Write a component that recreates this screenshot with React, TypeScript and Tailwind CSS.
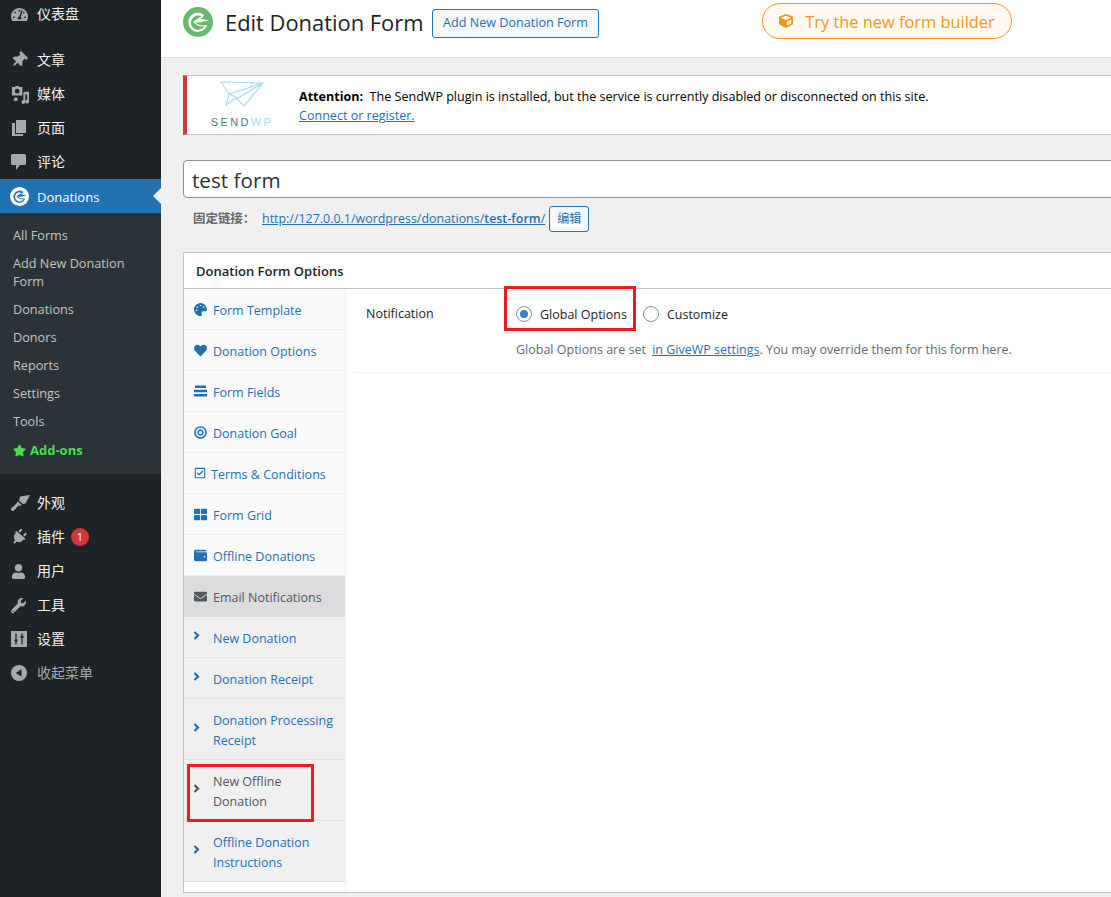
import type { ReactNode } from 'react'
import {
  FaThumbtack, FaPlug, FaUser, FaWrench, FaTachometerAlt, FaStar,
  FaPalette, FaHeart, FaBullseye, FaRegCheckSquare, FaThLarge, FaWallet, FaEnvelope, FaCube,
} from 'react-icons/fa'

const ff = "font-['Open_Sans','Noto_Sans_CJK_SC',sans-serif]"

function GiveLogo({ size, bg, fg }: { size: number; bg: string; fg: string }) {
  return (
    <svg width={size} height={size} viewBox="0 0 32 32">
      <circle cx="16" cy="16" r="16" fill={bg} />
      <path d="M22.5 8.5 A10.2 10.2 0 1 0 25.6 19.5 L18 19.5 L13 16.5 L28 14 L18.5 13.2 A5 5 0 0 1 20.5 11.5 Z" fill={fg} />
      <path d="M20 10.2 A7.6 7.6 0 1 0 22.6 20.6 L16.8 20.6 L10.6 16 L17.5 11.2 Z" fill={bg} />
      <path d="M12.5 16 L18 12.5 L27 14 L18 16.5 Z" fill={fg} />
    </svg>
  )
}

function MediaIcon() {
  return (
    <svg width="19" height="19" viewBox="0 0 20 20" fill="#a7aaad">
      <path d="M1 2h3l1-1h3l1 1h3v9H1z M6.500 4a2.500 2.500 0 1 0 0 5 2.500 2.500 0 0 0 0-5z" fillRule="evenodd" />
      <path d="M13 8h1v-1h5v10.500a2 2 0 1 1-2-2V10h-2v8a2 2 0 1 1-2-2z" />
      <path d="M5 13a2 2 0 1 1 0 4 2 2 0 0 1 0-4z" />
    </svg>
  )
}

function PagesIcon() {
  return (
    <svg width="16" height="17" viewBox="0 0 16 17" fill="#a7aaad">
      <path d="M5 0h10v13H5z" />
      <path d="M1 3h3v11h8v2H1z" />
    </svg>
  )
}

function CommentIcon() {
  return (
    <svg width="15" height="16" viewBox="0 0 15 16" fill="#a7aaad">
      <path d="M1.500 0h12A1.500 1.500 0 0 1 15 1.500v8A1.500 1.500 0 0 1 13.500 11H9l-4 5v-5H1.500A1.500 1.500 0 0 1 0 9.500v-8A1.500 1.500 0 0 1 1.500 0z" />
    </svg>
  )
}

function BrushIcon() {
  return (
    <svg width="19" height="16" viewBox="0 0 19 16" fill="#a7aaad">
      <path d="M9 1.500 L19 0 L14.500 8.500 L11.500 9 L8 5.500 Z" />
      <path d="M7 6.500 L10.500 10 L9.500 11 L7.500 10.500 L3 15.500 Q1.500 16.500 0.500 15.500 Q-0.500 14.500 0.500 13 L5.500 8.500 L6 7.500 Z" />
    </svg>
  )
}

function SettingsIcon() {
  return (
    <svg width="16" height="16" viewBox="0 0 16 16">
      <rect width="16" height="16" fill="#a7aaad" />
      <path d="M5 2.500v11M11 2.500v11" stroke="#1d2327" strokeWidth="1.200" />
      <path d="M3.500 9.500h3M9.500 6h3" stroke="#1d2327" strokeWidth="1.800" />
    </svg>
  )
}

function CollapseIcon() {
  return (
    <svg width="16" height="16" viewBox="0 0 16 16">
      <circle cx="8" cy="8" r="8" fill="#a7aaad" />
      <path d="M10.500 4.200v7.600L4.800 8z" fill="#1d2327" />
    </svg>
  )
}

function FieldsIcon({ color }: { color: string }) {
  return (
    <svg width="13" height="12" viewBox="0 0 13 12" fill={color}>
      <rect x="1" y="0.500" width="11" height="2.500" />
      <rect x="0" y="4.750" width="13" height="2.500" />
      <rect x="0" y="9" width="13" height="2.500" />
    </svg>
  )
}

function Chevron({ color }: { color: string }) {
  return (
    <svg width="7" height="9" viewBox="0 0 7 9" fill="none" className="-mt-[3px] -ml-[1px]">
      <path d="M1.500 1 L5 4.500 L1.500 8" stroke={color} strokeWidth="2.200" />
    </svg>
  )
}

function SendWpLogo() {
  return (
    <div className="flex flex-col items-center w-[60px]">
      <svg width="44" height="28" viewBox="0 0 44 28" fill="none" stroke="#a9dcf5" strokeWidth="1.200">
        <path d="M1 1 L43 2 L24 25 L16 17 L6 24 L9 13 L18 17 L43 2 L9 13 Z" />
      </svg>
      <div className="mt-[6px] text-[11px] leading-[14px] tracking-[2.400px] font-['Liberation_Sans',sans-serif] whitespace-nowrap">
        <span className="text-[#4f7484]">SEND</span><span className="text-[#a9dcf5]">WP</span>
      </div>
    </div>
  )
}

function MenuItem({ icon, label, badge, muted, cls }: { icon: ReactNode; label: string; badge?: string; muted?: boolean; cls?: string }) {
  return (
    <div className={`flex items-center h-[34px] ${cls ?? ''}`}>
      <div className="w-[37px] pl-[11px] shrink-0 flex items-center">{icon}</div>
      <span className={`text-[14px] pb-[2px] ${muted ? 'text-[#a7aaad]' : 'text-[#f0f0f1]'}`}>{label}</span>
      {badge && (
        <span className="ml-[6px] w-[18px] h-[18px] rounded-full bg-[#d63638] text-white text-[11px] flex items-center justify-center">{badge}</span>
      )}
    </div>
  )
}

function Sidebar() {
  const sub = ['All Forms', 'Add New Donation Form', 'Donations', 'Donors', 'Reports', 'Settings', 'Tools']
  return (
    <aside className="w-[161px] shrink-0 bg-[#1d2327] flex flex-col">
      <MenuItem cls="-mt-[3px]" icon={<FaTachometerAlt size={17} color="#a7aaad" />} label="仪表盘" />
      <div className="h-[12px]" />
      <MenuItem icon={<FaThumbtack size={16} color="#a7aaad" className="rotate-[45deg]" />} label="文章" />
      <MenuItem icon={<MediaIcon />} label="媒体" />
      <MenuItem icon={<PagesIcon />} label="页面" />
      <MenuItem icon={<CommentIcon />} label="评论" />
      <div className="flex items-center h-[34px] bg-[#2271b1] relative">
        <div className="w-[37px] pl-[10px] shrink-0 flex items-center">
          <GiveLogo size={19} bg="#ffffff" fg="#2271b1" />
        </div>
        <span className="text-[13px] pt-[3px] text-white">Donations</span>
        <span className="absolute right-0 top-[9px] border-y-[8px] border-y-transparent border-r-[8px] border-r-[#f0f0f1]" />
      </div>
      <div className="bg-[#2c3338] h-[261px] pt-[8px] flex flex-col">
        {sub.map(s => (
          <div key={s} className="px-[13px] py-[5px] text-[12.700px] leading-[18px] text-[#c3c4c7]">{s}</div>
        ))}
        <div className="mt-[1px] px-[13px] py-[5px] text-[13px] leading-[18px] text-[#4ade4a] font-bold flex items-center gap-[4px]">
          <FaStar size={13} /> Add-ons
        </div>
      </div>
      <div className="h-[12px]" />
      <MenuItem icon={<BrushIcon />} label="外观" />
      <MenuItem icon={<FaPlug size={16} color="#a7aaad" className="rotate-[40deg]" />} label="插件" badge="1" />
      <MenuItem icon={<FaUser size={15} color="#a7aaad" />} label="用户" />
      <MenuItem icon={<FaWrench size={15} color="#a7aaad" />} label="工具" />
      <MenuItem icon={<SettingsIcon />} label="设置" />
      <MenuItem icon={<CollapseIcon />} label="收起菜单" muted />
    </aside>
  )
}

function Tab({ icon, label, tight }: { icon: ReactNode; label: string; tight?: boolean }) {
  return (
    <div className="flex items-center h-[41px] bg-[#fafafa] border-b border-[#f0f0f1] pl-[10px]">
      <div className={`${tight ? 'w-[17px]' : 'w-[19px]'} shrink-0 flex items-center`}>{icon}</div>
      <span className="text-[12.500px] pt-[4px] text-[#2271b1] whitespace-nowrap">{label}</span>
    </div>
  )
}

function SubTab({ label, h, dark }: { label: string; h: string; dark?: boolean }) {
  return (
    <div className={`flex items-center ${h} border-b border-[#e4e4e4] pl-[10px] bg-[#f0f0f1]`}>
      <div className="w-[19px] shrink-0 flex items-center">
        <Chevron color={dark ? '#50575e' : '#2271b1'} />
      </div>
      <span className={`text-[12.500px] pt-[4px] leading-[20px] max-w-[124px] ${dark ? 'text-[#50575e] max-w-[90px]' : 'text-[#2271b1]'}`}>{label}</span>
    </div>
  )
}

function FormBox() {
  const ic = '#2271b1'
  return (
    <section className="mt-[20px] h-[641px] w-[1000px] bg-white border border-[#c3c4c7] flex flex-col">
      <div className="h-[36px] shrink-0 flex items-center pl-[12px] pt-[2px] border-b border-[#c3c4c7] text-[13px] font-semibold text-[#1d2327]">
        Donation Form Options
      </div>
      <div className="flex flex-1">
        <div className="w-[162px] shrink-0 border-r border-[#f0f0f1] flex flex-col">
          <Tab icon={<FaPalette size={13} color={ic} />} label="Form Template" />
          <Tab icon={<FaHeart size={13} color={ic} />} label="Donation Options" />
          <Tab icon={<FieldsIcon color={ic} />} label="Form Fields" />
          <Tab icon={<FaBullseye size={13} color={ic} />} label="Donation Goal" />
          <Tab tight icon={<FaRegCheckSquare size={12} color={ic} />} label="Terms & Conditions" />
          <Tab icon={<FaThLarge size={13} color={ic} />} label="Form Grid" />
          <Tab icon={<FaWallet size={13} color={ic} />} label="Offline Donations" />
          <div className="flex items-center h-[41px] bg-[#dcdcde] pl-[10px]">
            <div className="w-[19px] shrink-0 flex items-center"><FaEnvelope size={13} color="#50575e" /></div>
            <span className="text-[12.500px] pt-[4px] text-[#50575e]">Email Notifications</span>
          </div>
          <SubTab label="New Donation" h="h-[41px]" />
          <SubTab label="Donation Receipt" h="h-[41px]" />
          <SubTab label="Donation Processing Receipt" h="h-[61px]" />
          <SubTab label="New Offline Donation" h="h-[61px]" dark />
          <SubTab label="Offline Donation Instructions" h="h-[61px]" />
        </div>
        <div className="flex-1 pl-[8px]">
          <div className="w-[760px] h-[84px] border-b border-[#f0f0f1] pl-[12px]">
            <div className="flex items-center pt-[1px] h-[49px]">
              <span className="w-[150px] text-[12.500px] text-[#1d2327]">Notification</span>
              <span className="w-[16px] h-[16px] rounded-full border border-[#8c8f94] flex items-center justify-center">
                <span className="w-[8px] h-[8px] rounded-full bg-[#3582c4]" />
              </span>
              <span className="ml-[8px] pt-[2px] text-[12.500px] text-[#1d2327]">Global Options</span>
              <span className="ml-[16px] w-[16px] h-[16px] rounded-full border border-[#8c8f94] bg-white" />
              <span className="ml-[8px] pt-[2px] text-[12.500px] text-[#1d2327]">Customize</span>
            </div>
            <p className="pl-[150px] mt-[3px] text-[12.500px] text-[#646970] whitespace-nowrap">
              Global Options are set <span className="ml-[3px] text-[#2271b1] underline">in GiveWP settings</span>. You may override them for this form here.
            </p>
          </div>
        </div>
      </div>
    </section>
  )
}

export default function App() {
  return (
    <div className={`w-[1111px] h-[897px] overflow-hidden relative flex bg-[#f0f0f1] ${ff}`}>
      <Sidebar />
      <main className="flex-1 min-w-0 overflow-hidden flex flex-col">
        <header className="h-[58px] shrink-0 bg-white border-b border-[#dcdcde] flex items-start pl-[22px]">
          <div className="mt-[7px]"><GiveLogo size={30} bg="#66bb6a" fg="#ffffff" /></div>
          <h1 className="ml-[12px] mt-[5px] w-[198px] whitespace-nowrap text-[21.900px] leading-[36px] text-[#1d2327]">Edit Donation Form</h1>
          <button className="ml-[9px] mt-[9px] w-[167px] h-[29px] rounded-[3px] border border-[#2271b1] bg-[#f6f7f7] text-[12.600px] text-[#2271b1]">
            Add New Donation Form
          </button>
          <button className="ml-[163px] mt-[3px] w-[250px] h-[36px] rounded-[18px] border border-[#f29718] bg-[#fff9f1] text-[#f29718] text-[16.400px] flex items-center justify-center gap-[12px]">
            <FaCube size={14} /> <span className="pt-[2px]">Try the new form builder</span>
          </button>
        </header>
        <div className="pl-[22px] flex-1">
          <div className="mt-[17px] w-[1000px] h-[60px] bg-white border border-[#c3c4c7] border-l-4 border-l-[#d63638] flex items-center">
            <div className="ml-[25px]"><SendWpLogo /></div>
            <div className="ml-[27px] pt-[2px] text-[12.550px] leading-[19px] text-black">
              <div><b className="font-bold">Attention:</b>&nbsp; The SendWP plugin is installed, but the service is currently disabled or disconnected on this site.</div>
              <div className="text-[#2271b1] underline">Connect or register.</div>
            </div>
          </div>
          <div className="mt-[25px] w-[1000px] h-[38px] bg-white border border-[#8c8f94] rounded-[4px] pl-[8px] pt-[3px] flex items-center text-[20.700px] text-[#2c3338]">
            test form
          </div>
          <div className="mt-[8px] h-[26px] flex items-center pl-[10px] text-[12.450px]">
            <span className="font-semibold text-[#646970] w-[69px]">固定链接：</span>
            <span className="text-[#2271b1] underline">http://127.0.0.1/wordpress/donations/<b className="font-semibold">test-form</b>/</span>
            <span className="ml-[4px] w-[40px] h-[26px] border border-[#2271b1] rounded-[3px] bg-[#f6f7f7] text-[#2271b1] text-[12px] flex items-center justify-center">编辑</span>
          </div>
          <FormBox />
        </div>
      </main>
      {/* annotation boxes over the screenshot */}
      <div className="absolute left-[504px] top-[286px] w-[132px] h-[45px] border-[3px] border-[#ed1c24]" />
      <div className="absolute left-[187px] top-[764px] w-[127px] h-[58px] border-[3px] border-[#ed1c24]" />
    </div>
  )
}
